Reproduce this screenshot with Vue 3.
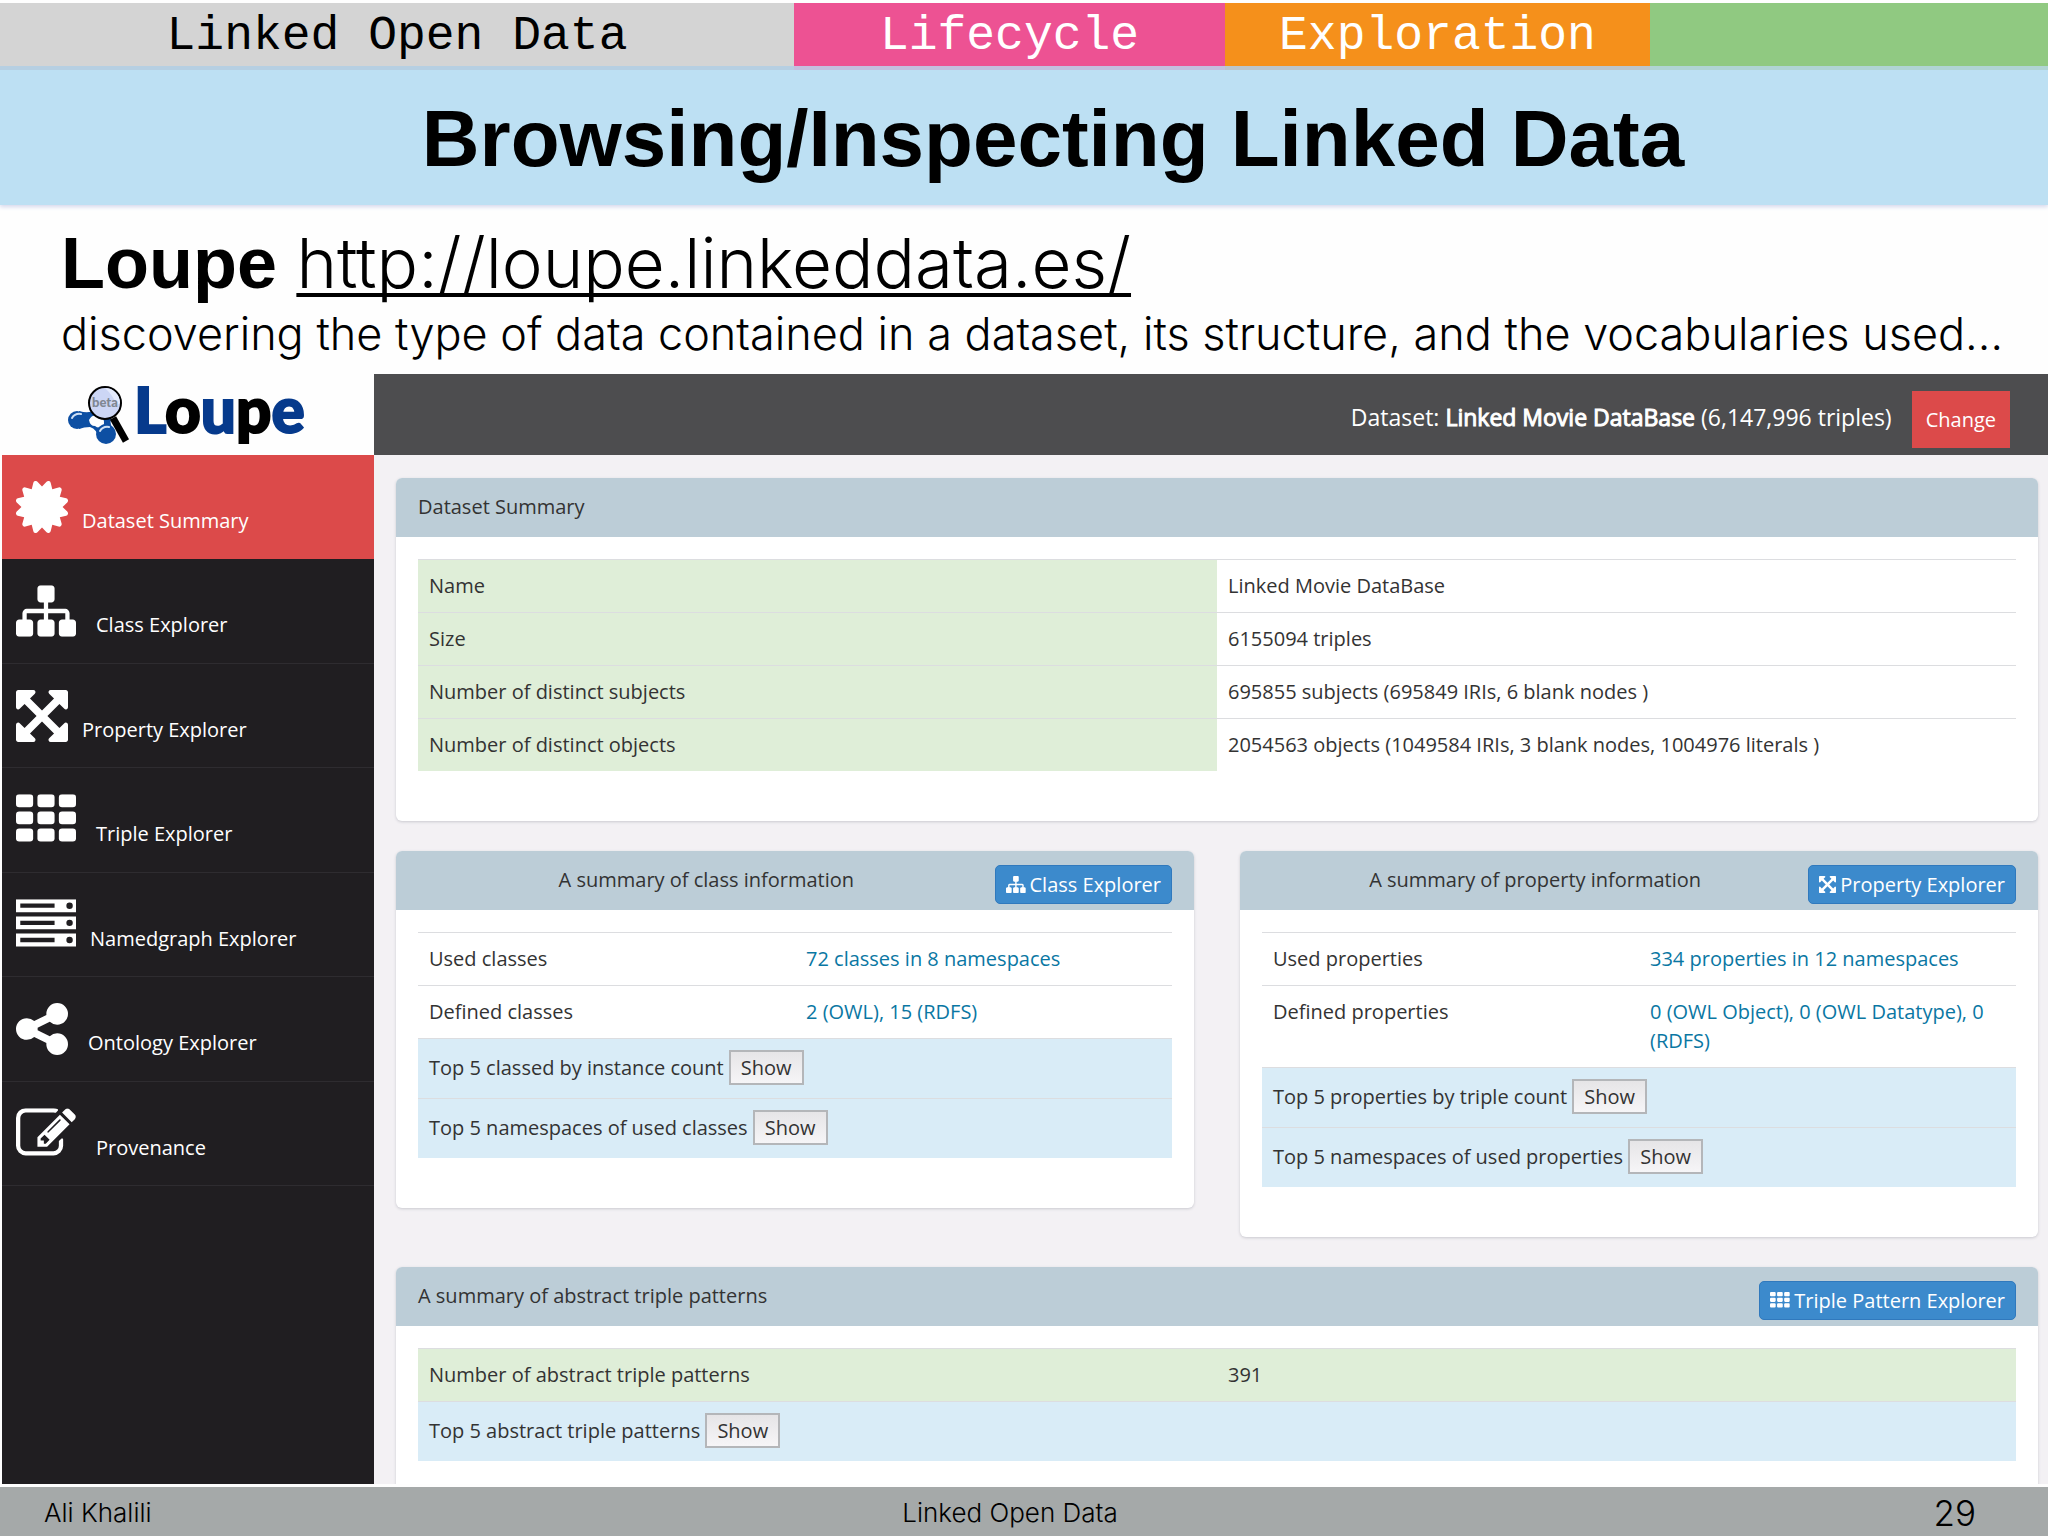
<script setup>
import { ref } from 'vue'

const tabs = [
  { label: 'Linked Open Data', name: 'topic' },
  { label: 'Lifecycle', name: 'lifecycle' },
  { label: 'Exploration', name: 'exploration' },
  { label: '', name: 'rest' }
]

// w: icon width in icon units, wide: bigger gap before the label
const menu = [
  { label: 'Dataset Summary', icon: 'certificate', w: 1536, wide: false },
  { label: 'Class Explorer', icon: 'sitemap', w: 1792, wide: true },
  { label: 'Property Explorer', icon: 'arrows', w: 1536, wide: false },
  { label: 'Triple Explorer', icon: 'th', w: 1792, wide: true },
  { label: 'Namedgraph Explorer', icon: 'server', w: 1792, wide: false },
  { label: 'Ontology Explorer', icon: 'share', w: 1536, wide: true },
  { label: 'Provenance', icon: 'edit', w: 1792, wide: true }
]
const current = ref('Dataset Summary')

const summary = [
  ['Name', 'Linked Movie DataBase'],
  ['Size', '6155094 triples'],
  ['Number of distinct subjects', '695855 subjects (695849 IRIs, 6 blank nodes )'],
  ['Number of distinct objects', '2054563 objects (1049584 IRIs, 3 blank nodes, 1004976 literals )']
]

const infoPanels = [
  {
    title: 'A summary of class information',
    button: 'Class Explorer',
    icon: 'sitemap',
    w: 1792,
    rows: [
      ['Used classes', '72 classes in 8 namespaces'],
      ['Defined classes', '2 (OWL), 15 (RDFS)']
    ],
    tops: ['Top 5 classed by instance count', 'Top 5 namespaces of used classes']
  },
  {
    title: 'A summary of property information',
    button: 'Property Explorer',
    icon: 'arrows',
    w: 1536,
    rows: [
      ['Used properties', '334 properties in 12 namespaces'],
      ['Defined properties', '0 (OWL Object), 0 (OWL Datatype), 0 (RDFS)']
    ],
    tops: ['Top 5 properties by triple count', 'Top 5 namespaces of used properties']
  }
]
</script>

<template>
  <div class="slide">
    <!-- icon set -->
    <svg class="sprite" aria-hidden="true">
      <symbol id="certificate" viewBox="0 128 1536 1536">
        <path d="M1376 896l138 135q30 28 20 70-12 41-52 51l-188 48 53 186q12 41-19 70-29 31-70 19l-186-53-48 188q-10 40-51 52-12 2-19 2-31 0-51-22l-135-138-135 138q-28 30-70 20-41-11-51-52l-48-188-186 53q-41 12-70-19-31-29-19-70l53-186-188-48q-40-10-52-51-10-42 20-70l138-135-138-135q-30-28-20-70 12-41 52-51l188-48-53-186q-12-41 19-70 29-31 70-19l186 53 48-188q10-41 51-51 41-12 70 19l135 139 135-139q29-30 70-19 41 10 51 51l48 188 186-53q41-12 70 19 31 29 19 70l-53 186 188 48q40 10 52 51 10 42-20 70z" />
      </symbol>
      <symbol id="sitemap" viewBox="0 128 1792 1536">
        <path d="M1792 1248v320q0 40-28 68t-68 28h-320q-40 0-68-28t-28-68v-320q0-40 28-68t68-28h96v-192h-512v192h96q40 0 68 28t28 68v320q0 40-28 68t-68 28h-320q-40 0-68-28t-28-68v-320q0-40 28-68t68-28h96v-192h-512v192h96q40 0 68 28t28 68v320q0 40-28 68t-68 28h-320q-40 0-68-28t-28-68v-320q0-40 28-68t68-28h96v-192q0-52 38-90t90-38h512v-192h-96q-40 0-68-28t-28-68v-320q0-40 28-68t68-28h320q40 0 68 28t28 68v320q0 40-28 68t-68 28h-96v192h512q52 0 90 38t38 90v192h96q40 0 68 28t28 68z" />
      </symbol>
      <symbol id="arrows" viewBox="0 0 1536 1536">
        <path d="M1283 413l-355 355 355 355 144-144q29-31 70-14 39 17 39 59v448q0 26-19 45t-45 19h-448q-42 0-59-40-17-39 14-69l144-144-355-355-355 355 144 144q31 30 14 69-17 40-59 40h-448q-26 0-45-19t-19-45v-448q0-42 40-59 39-17 69 14l144 144 355-355-355-355-144 144q-19 19-45 19-12 0-24-5-40-17-40-59v-448q0-26 19-45t45-19h448q42 0 59 40 17 39-14 69l-144 144 355 355 355-355-144-144q-31-30-14-69 17-40 59-40h448q26 0 45 19t19 45v448q0 42-39 59-13 5-25 5-26 0-45-19z" />
      </symbol>
      <symbol id="th" viewBox="0 128 1792 1536">
        <template v-for="y in [128, 640, 1152]" :key="y">
          <rect v-for="x in [0, 640, 1280]" :key="x" :x="x" :y="y" width="512" height="384" rx="96" />
        </template>
      </symbol>
      <symbol id="server" viewBox="0 128 1792 1536">
        <path v-for="y in [128, 640, 1152]" :key="y" fill-rule="evenodd" :d="`M0 ${y}h1792v384h-1792zM128 ${y + 128}v128h1024v-128zM1504 ${y + 192}a96 96 0 1 0 192 0a96 96 0 1 0-192 0z`" />
      </symbol>
      <symbol id="share" viewBox="0 128 1536 1536">
        <path d="M1216 1024q133 0 226.5 93.5t93.5 226.5-93.5 226.5-226.5 93.5-226.5-93.5-93.5-226.5q0-12 2-34l-360-180q-92 86-218 86-133 0-226.5-93.5t-93.5-226.5 93.5-226.5 226.5-93.5q126 0 218 86l360-180q-2-22-2-34 0-133 93.5-226.5t226.5-93.5 226.5 93.5 93.5 226.5-93.5 226.5-226.5 93.5q-126 0-218-86l-360 180q2 22 2 34t-2 34l360 180q92-86 218-86z" />
      </symbol>
      <symbol id="edit" viewBox="0 128 1792 1536">
        <path d="M888 1184l116-116-152-152-116 116v56h96v96h56zm440-720q-16-16-33 1l-350 350q-17 17-1 33t33-1l350-350q17-17 1-33zm80 594v190q0 119-84.5 203.5t-203.5 84.5h-832q-119 0-203.5-84.5t-84.5-203.5v-832q0-119 84.5-203.5t203.5-84.5h832q63 0 117 25 15 7 18 23 3 17-9 29l-49 49q-14 14-32 8-23-6-45-6h-832q-66 0-113 47t-47 113v832q0 66 47 113t113 47h832q66 0 113-47t47-113v-126q0-13 9-22l64-64q15-15 35-7t20 29zm-96-738l288 288-672 672h-288v-288zm444 132l-92 92-288-288 92-92q28-28 68-28t68 28l152 152q28 28 28 68t-28 68z" />
      </symbol>
    </svg>

    <div class="tabs">
      <div v-for="tab in tabs" :key="tab.name" class="tab" :class="tab.name">{{ tab.label }}</div>
    </div>

    <h1 class="title">Browsing/Inspecting Linked Data</h1>

    <div class="intro">
      <p class="lead"><b>Loupe</b> <a href="http://loupe.linkeddata.es/">http://loupe.linkeddata.es/</a></p>
      <p class="desc">discovering the type of data contained in a dataset, its structure, and the vocabularies used…</p>
    </div>

    <div class="app">
      <aside class="sidebar">
        <div class="logo">
          <svg class="logo-mark" viewBox="0 0 64 60" aria-hidden="true">
            <path d="M12 26Q22 29 28 25L44 34Q42 40 48 46L32 54Q30 44 23 42Q17 42 12 44Z" fill="#0d4fa3" />
            <path d="M22 35q4-7 10-3q6 1 5 7q-4 6-9 2q-5 0-6-6z" fill="#fff" />
            <circle cx="10" cy="35" r="9" fill="#0d4fa3" />
            <circle cx="39" cy="49" r="10" fill="#0d4fa3" />
            <path d="M5 33q3-5 9-4" fill="none" stroke="#cfe0f5" stroke-width="2" stroke-linecap="round" />
            <path d="M33 46q3-5 9-4" fill="none" stroke="#cfe0f5" stroke-width="2" stroke-linecap="round" />
            <path d="M46 33l13 23" stroke="#000" stroke-width="7" />
            <circle cx="38" cy="18" r="16" fill="#ccd6f5" stroke="#000" stroke-width="2" />
            <path d="M38 3a15 15 0 0 1 15 15l-3 2a50 50 0 0 0-12-17z" fill="#e4eafc" />
            <text x="38" y="22" text-anchor="middle" class="beta">beta</text>
          </svg>
          <span class="logo-text"><i>L</i>o<i>u</i>p<i>e</i></span>
        </div>
        <nav class="menu">
          <a
            v-for="item in menu"
            :key="item.label"
            href="#"
            class="menu-item"
            :class="{ active: current === item.label, wide: item.wide }"
            @click.prevent="current = item.label"
          >
            <svg :class="item.w === 1792 ? 'icon-wide' : 'icon'" :viewBox="`0 0 ${item.w} 1536`">
              <use :href="'#' + item.icon" :width="item.w" height="1536" />
            </svg>
            <span>{{ item.label }}</span>
          </a>
        </nav>
      </aside>

      <div class="content">
        <header class="topbar">
          <span class="dataset">Dataset: <b>Linked Movie DataBase</b> (6,147,996 triples)</span>
          <button class="change-btn">Change</button>
        </header>

        <main class="main">
          <section class="panel">
            <div class="panel-head"><h2>Dataset Summary</h2></div>
            <div class="panel-body">
              <table>
                <tbody>
                  <tr v-for="row in summary" :key="row[0]">
                    <td class="green">{{ row[0] }}</td>
                    <td>{{ row[1] }}</td>
                  </tr>
                </tbody>
              </table>
            </div>
          </section>

          <div class="columns">
            <section v-for="panel in infoPanels" :key="panel.title" class="panel">
              <div class="panel-head centered">
                <h2>{{ panel.title }}</h2>
                <button class="explore-btn">
                  <svg class="btn-icon" :viewBox="`0 0 ${panel.w} 1536`">
                    <use :href="'#' + panel.icon" :width="panel.w" height="1536" />
                  </svg>
                  {{ panel.button }}
                </button>
              </div>
              <div class="panel-body">
                <table>
                  <tbody>
                    <tr v-for="row in panel.rows" :key="row[0]">
                      <td>{{ row[0] }}</td>
                      <td><a href="#">{{ row[1] }}</a></td>
                    </tr>
                    <tr v-for="top in panel.tops" :key="top" class="blue">
                      <td colspan="2">{{ top }} <button class="show-btn">Show</button></td>
                    </tr>
                  </tbody>
                </table>
              </div>
            </section>
          </div>

          <section class="panel">
            <div class="panel-head">
              <h2>A summary of abstract triple patterns</h2>
              <button class="explore-btn">
                <svg class="btn-icon" viewBox="0 0 1792 1536">
                  <use href="#th" width="1792" height="1536" />
                </svg>
                Triple Pattern Explorer
              </button>
            </div>
            <div class="panel-body">
              <table>
                <tbody>
                  <tr class="green">
                    <td>Number of abstract triple patterns</td>
                    <td>391</td>
                  </tr>
                  <tr class="blue">
                    <td colspan="2">Top 5 abstract triple patterns <button class="show-btn">Show</button></td>
                  </tr>
                </tbody>
              </table>
            </div>
          </section>
        </main>
      </div>
    </div>

    <footer class="footer">
      <span>Ali Khalili</span>
      <span>Linked Open Data</span>
      <span class="page-no">29</span>
    </footer>
  </div>
</template>

<style>
body {
  margin: 0;
  background: #fefefe;
}
</style>

<style scoped>
.slide {
  height: 100vh;
  display: flex;
  flex-direction: column;
  overflow: hidden;
  color: #000;
  font-family: "Inter", "Liberation Sans", sans-serif;
  font-weight: 300;
}

.sprite {
  position: absolute;
  width: 0;
  height: 0;
}

/* colored bars on top */
.tabs {
  display: flex;
  flex: none;
  margin-top: 3px;
  height: 63px;
}

.tab {
  position: relative;
  text-align: center;
  font-family: "Liberation Mono", monospace;
  font-size: 48px;
  line-height: 66px;
  color: #fff;
}

.topic {
  flex: 794;
  background: #d4d4d4;
  color: #000;
  box-shadow: 0 4px 0 #b6cfe2;
}

.lifecycle {
  flex: 431;
  background: #ed5293;
  box-shadow: 0 4px 0 #c4bfdf;
}

.exploration {
  flex: 425;
  background: #f5901b;
  box-shadow: 0 4px 0 #bcc5cb;
}

.rest {
  flex: 398;
  background: #90c981;
  box-shadow: 0 4px 0 #b0d4d4;
}

.title {
  flex: none;
  margin: 0;
  padding-left: 58px;
  height: 139px;
  background: #bde0f3;
  box-shadow: 0 2px 4px #d5d8ec;
  text-align: center;
  font-family: "Liberation Sans", sans-serif;
  font-size: 80px;
  font-weight: bold;
  line-height: 146px;
}

.intro {
  flex: none;
  height: 153px;
  padding: 16px 0 0 61px;
  white-space: nowrap;
}

.lead,
.desc {
  margin: 0;
}

.lead {
  font-size: 69px;
  line-height: 84px;
}

.lead b {
  font-family: "Liberation Sans", sans-serif;
  font-size: 72px;
  font-weight: bold;
}

.lead a {
  color: #000;
  text-decoration-thickness: 4px;
  text-underline-offset: 5px;
  text-decoration-skip-ink: none;
}

.desc {
  font-size: 45px;
  line-height: 58px;
}

/* application window */
.app {
  flex: 1;
  min-height: 0;
  display: flex;
  margin: 0 0 3px 2px;
  font-family: "Open Sans", "Noto Sans", sans-serif;
  font-size: 20px;
  font-weight: 400;
  line-height: 29px;
  color: #333;
}

.sidebar {
  flex: none;
  width: 372px;
  background: #201e21;
}

.logo {
  display: flex;
  align-items: flex-start;
  height: 81px;
  padding-left: 65px;
  box-sizing: border-box;
  background: #fefefe;
}

.logo-mark {
  width: 64px;
  height: 60px;
  margin-top: 11px;
}

.beta {
  font-family: "Lato", sans-serif;
  font-size: 13px;
  font-weight: 900;
  fill: #7f8792;
}

.logo-text {
  padding-left: 3px;
  font-family: "Lato", sans-serif;
  font-size: 62px;
  font-weight: 900;
  line-height: 70px;
  color: #000;
  -webkit-text-stroke: 2px currentColor;
}

.logo-text i {
  font-style: normal;
  color: #063a8c;
}

.menu {
  display: grid;
  grid-auto-rows: 1fr;
  height: 731px;
}

.menu-item {
  display: flex;
  align-items: flex-start;
  gap: 14px;
  padding: 26px 14px 0;
  border-bottom: 1px solid #2e2c30;
  color: #fff;
  fill: #fff;
  text-decoration: none;
}

.menu-item.wide {
  gap: 20px;
}

.menu-item.active {
  background: #dc4a4a;
  border-color: #dc4a4a;
}

.menu-item span {
  padding-top: 25px;
}

.icon {
  width: 52px;
  height: 52px;
}

.icon-wide {
  width: 60px;
  height: 52px;
}

.content {
  flex: 1;
  min-width: 0;
  overflow: hidden;
  background: #f3f1f4;
}

.topbar {
  display: flex;
  justify-content: flex-end;
  align-items: flex-start;
  gap: 20px;
  height: 81px;
  padding: 17px 38px 0 0;
  box-sizing: border-box;
  background: #4d4d4f;
  color: #fff;
}

.dataset {
  padding-top: 12px;
  font-size: 23px;
}

/* regular letters, thickened */
.dataset b {
  font-weight: 400;
  -webkit-text-stroke: 1px currentColor;
}

.change-btn {
  height: 57px;
  padding: 0 14px;
  border: 0;
  background: #dc4a4a;
  color: #fff;
  font-family: inherit;
  font-size: 20px;
  cursor: pointer;
}

.main {
  display: flex;
  flex-direction: column;
  gap: 30px;
  padding: 23px 10px 0 22px;
}

.columns {
  display: flex;
  align-items: flex-start;
  gap: 46px;
}

.columns .panel {
  flex: 1;
}

.panel {
  border-radius: 6px;
  background: #fff;
  box-shadow: 0 1px 3px #c9c9cf;
}

.panel-head {
  display: flex;
  justify-content: space-between;
  align-items: flex-start;
  height: 59px;
  padding: 14px 22px 0;
  box-sizing: border-box;
  border-radius: 6px 6px 0 0;
  background: #bccdd7;
}

.panel-head h2 {
  margin: 0;
  font-size: 20px;
  font-weight: 400;
}

.centered h2 {
  flex: 1;
  text-align: center;
}

.panel-body {
  padding: 22px 22px 50px;
}

table {
  width: 100%;
  table-layout: fixed;
  border-collapse: separate;
  border-spacing: 0;
}

td {
  padding: 11px 11px 12px;
  border-top: 1px solid #dcdde0;
  vertical-align: top;
}

td a {
  color: #0a77a3;
  text-decoration: none;
}

.green {
  background: #dfeed8;
}

.blue {
  background: #d9ecf7;
}

.blue td {
  padding: 11px 11px 13px;
}

.explore-btn {
  display: flex;
  align-items: center;
  gap: 4px;
  height: 39px;
  padding: 0 10px;
  border: 1px solid #3079bd;
  border-radius: 5px;
  background: #3c8acc;
  color: #fff;
  fill: #fff;
  font-family: inherit;
  font-size: 20px;
  cursor: pointer;
}

.btn-icon {
  height: 17px;
}

.show-btn {
  height: 35px;
  padding: 0 10px;
  border: 2px solid #b4b6b9;
  background: linear-gradient(#e6e5e7, #f6f5f7);
  color: #333;
  font-family: inherit;
  font-size: 20px;
  line-height: 29px;
  cursor: pointer;
}

.footer {
  flex: none;
  display: grid;
  grid-template-columns: 1fr auto 1fr;
  align-items: center;
  height: 49px;
  padding: 2px 72px 0 44px;
  box-sizing: border-box;
  background: #a5a9a9;
  font-size: 26px;
}

.page-no {
  justify-self: end;
  font-size: 35px;
}
</style>
